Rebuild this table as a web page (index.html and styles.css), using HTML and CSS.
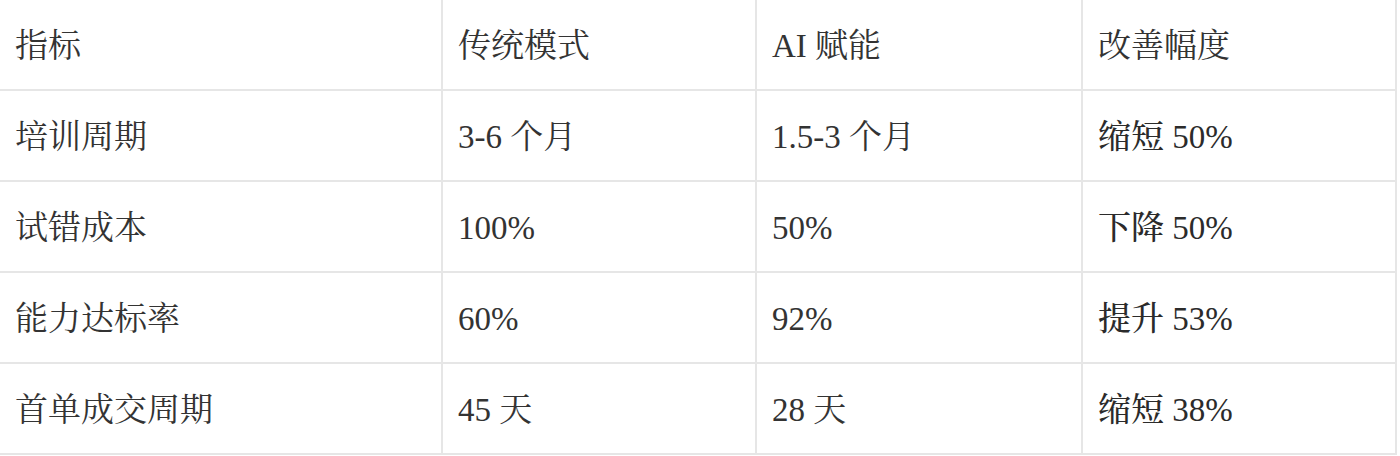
FILE: index.html
```html
<!DOCTYPE html>
<html lang="zh-CN">
<head>
<meta charset="utf-8">
<title>AI 赋能对比</title>
<link rel="stylesheet" href="styles.css">
</head>
<body>
<table class="compare">
  <colgroup>
    <col class="c1"><col class="c2"><col class="c3"><col class="c4">
  </colgroup>
  <thead>
    <tr><th>指标</th><th>传统模式</th><th>AI 赋能</th><th>改善幅度</th></tr>
  </thead>
  <tbody>
    <tr><td>培训周期</td><td>3-6 个月</td><td>1.5-3 个月</td><td class="gain">缩短 50%</td></tr>
    <tr><td>试错成本</td><td>100%</td><td>50%</td><td class="gain">下降 50%</td></tr>
    <tr><td>能力达标率</td><td>60%</td><td>92%</td><td class="gain">提升 53%</td></tr>
    <tr><td>首单成交周期</td><td>45 天</td><td>28 天</td><td class="gain">缩短 38%</td></tr>
  </tbody>
</table>
</body>
</html>
```
FILE: styles.css
```css
html, body {
  margin: 0;
  padding: 0;
  background: #ffffff;
}
body {
  font-family: "Liberation Serif", "Noto Serif CJK SC", "Noto Sans CJK SC", serif;
  color: #333333;
}
.compare {
  border-collapse: collapse;
  table-layout: fixed;
  width: 1397px;
  font-size: 33px;
}
.compare .c1 { width: 442px; }
.compare .c2 { width: 314px; }
.compare .c3 { width: 326px; }
.compare .c4 { width: 314px; }
.compare th,
.compare td {
  border: 2px solid #e6e6e6;
  padding: 28px 15px 24px;
  line-height: 37px;
  text-align: left;
  font-weight: 400;
  vertical-align: middle;
}
.compare thead th {
  border-top: none;
}
.compare th:first-child,
.compare td:first-child {
  border-left: none;
}
.compare td.gain {
  font-weight: 500;
  color: #2b2b2b;
}
```
